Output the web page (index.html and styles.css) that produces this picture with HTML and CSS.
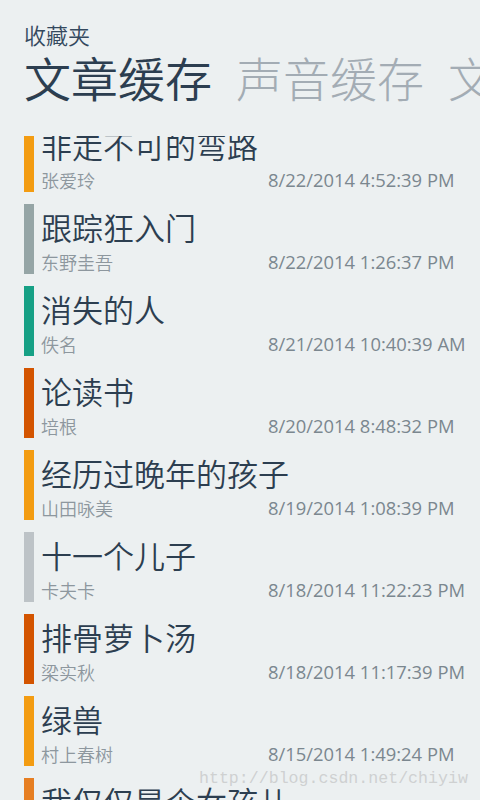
FILE: index.html
```html
<!DOCTYPE html>
<html lang="zh-CN">
<head>
<meta charset="utf-8">
<title>收藏夹</title>
<link rel="stylesheet" href="styles.css">
</head>
<body>
<div class="app">
  <header class="header">
    <div class="app-title">收藏夹</div>
    <div class="pivot">
      <span class="pivot-item active">文章缓存</span>
      <span class="pivot-item">声音缓存</span>
      <span class="pivot-item">文章缓存</span>
    </div>
  </header>
  <div class="viewport">
    <ul class="list">
      <li class="item"><span class="bar c-orange"></span><div class="body"><div class="title">非走不可的弯路</div><div class="meta"><span class="author">张爱玲</span><span class="date">8/22/2014 4:52:39 PM</span></div></div></li>
      <li class="item"><span class="bar c-gray"></span><div class="body"><div class="title">跟踪狂入门</div><div class="meta"><span class="author">东野圭吾</span><span class="date">8/22/2014 1:26:37 PM</span></div></div></li>
      <li class="item"><span class="bar c-teal"></span><div class="body"><div class="title">消失的人</div><div class="meta"><span class="author">佚名</span><span class="date">8/21/2014 10:40:39 AM</span></div></div></li>
      <li class="item"><span class="bar c-pumpkin"></span><div class="body"><div class="title">论读书</div><div class="meta"><span class="author">培根</span><span class="date">8/20/2014 8:48:32 PM</span></div></div></li>
      <li class="item"><span class="bar c-orange"></span><div class="body"><div class="title">经历过晚年的孩子</div><div class="meta"><span class="author">山田咏美</span><span class="date">8/19/2014 1:08:39 PM</span></div></div></li>
      <li class="item"><span class="bar c-silver"></span><div class="body"><div class="title">十一个儿子</div><div class="meta"><span class="author">卡夫卡</span><span class="date">8/18/2014 11:22:23 PM</span></div></div></li>
      <li class="item"><span class="bar c-pumpkin"></span><div class="body"><div class="title">排骨萝卜汤</div><div class="meta"><span class="author">梁实秋</span><span class="date">8/18/2014 11:17:39 PM</span></div></div></li>
      <li class="item"><span class="bar c-orange"></span><div class="body"><div class="title">绿兽</div><div class="meta"><span class="author">村上春树</span><span class="date">8/15/2014 1:49:24 PM</span></div></div></li>
      <li class="item"><span class="bar c-carrot"></span><div class="body"><div class="title">我仅仅是个女孩儿</div><div class="meta"><span class="author">佚名</span><span class="date">8/14/2014 9:12:05 PM</span></div></div></li>
    </ul>
  </div>
  <div class="watermark">http://blog.csdn.net/chiyiw</div>
</div>
</body>
</html>
```
FILE: styles.css
```css
html, body {
  margin: 0;
  padding: 0;
}
body {
  background: #ecf0f1;
  font-family: "Open Sans", "Noto Sans CJK SC", sans-serif;
  color: #2c3e50;
  width: 480px;
  height: 800px;
  overflow: hidden;
}
.app {
  position: relative;
  width: 480px;
  height: 800px;
  overflow: hidden;
}
.header {
  padding: 21px 0 0 24px;
}
.app-title {
  font-family: "Noto Sans CJK SC", sans-serif;
  font-weight: 350;
  font-size: 22px;
  line-height: 26px;
  color: #34495e;
}
.pivot {
  display: flex;
  white-space: nowrap;
  gap: 24px;
  margin-top: 0;
}
.pivot-item {
  font-family: "Noto Sans CJK SC", sans-serif;
  font-weight: 300;
  font-size: 47px;
  line-height: 60px;
  color: #a3acb4;
  flex: none;
}
.pivot-item.active {
  color: #2c3e50;
  font-weight: 350;
}
.viewport {
  margin-top: 29px;
  height: 664px;
  overflow: hidden;
}
.list {
  list-style: none;
  margin: -14px 0 0 0;
  padding: 0 0 0 24px;
  display: flex;
  flex-direction: column;
  gap: 12px;
}
.item {
  display: flex;
  height: 70px;
}
.bar {
  width: 10px;
  flex: none;
}
.c-orange { background: #f39c12; }
.c-gray { background: #95a5a6; }
.c-teal { background: #16a085; }
.c-pumpkin { background: #d35400; }
.c-silver { background: #bdc3c7; }
.c-carrot { background: #e67e22; }
.body {
  padding-left: 7px;
  flex: 1;
  display: flex;
  flex-direction: column;
}
.title {
  font-family: "Noto Sans CJK SC", sans-serif;
  font-weight: 350;
  font-size: 31px;
  line-height: 46px;
  color: #2c3e50;
  white-space: nowrap;
}
.meta {
  display: grid;
  grid-template-columns: 227px 1fr;
  line-height: 24px;
  color: #7f8c8d;
}
.author {
  font-family: "Noto Sans CJK SC", sans-serif;
  font-weight: 350;
  font-size: 18px;
  color: #8d979e;
}
.date {
  font-family: "Open Sans", sans-serif;
  font-size: 18.4px;
  color: #7b878f;
  white-space: nowrap;
}
.watermark {
  position: absolute;
  left: 199px;
  top: 768px;
  font-family: "Liberation Mono", monospace;
  font-size: 16.6px;
  line-height: 22px;
  color: #cfd1d1;
  white-space: nowrap;
  pointer-events: none;
}
```
